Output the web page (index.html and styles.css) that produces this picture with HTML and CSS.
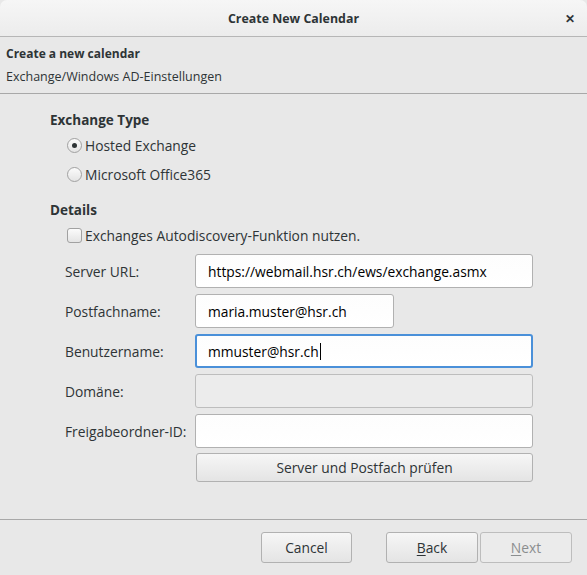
FILE: index.html
```html
<!DOCTYPE html>
<html>
<head>
<meta charset="utf-8">
<link rel="stylesheet" href="styles.css">
</head>
<body>
<div class="window">
  <div class="titlebar">
    <span class="title">Create New Calendar</span>
    <span class="close">✕</span>
  </div>
  <div class="header">
    <div class="header-title">Create a new calendar</div>
    <div class="header-sub">Exchange/Windows AD-Einstellungen</div>
  </div>
  <div class="content">
    <div class="section-title">Exchange Type</div>
    <label class="choice first"><span class="radio checked"></span>Hosted Exchange</label>
    <label class="choice second"><span class="radio"></span>Microsoft Office365</label>
    <div class="section-title details">Details</div>
    <label class="choice check-row"><span class="checkbox"></span>Exchanges Autodiscovery-Funktion nutzen.</label>
    <div class="form">
      <div class="label">Server URL:</div>
      <div class="entry">https://webmail.hsr.ch/ews/exchange.asmx</div>
      <div class="label">Postfachname:</div>
      <div class="entry short">maria.muster@hsr.ch</div>
      <div class="label">Benutzername:</div>
      <div class="entry focused">mmuster@hsr.ch<span class="caret"></span></div>
      <div class="label">Domäne:</div>
      <div class="entry disabled"></div>
      <div class="label">Freigabeordner-ID:</div>
      <div class="entry"></div>
      <div></div>
      <div class="button wide">Server und Postfach prüfen</div>
    </div>
  </div>
  <div class="footer">
    <div class="button cancel">Cancel</div>
    <div class="nav">
      <div class="button back"><u>B</u>ack</div>
      <div class="button next disabled-btn"><u>N</u>ext</div>
    </div>
  </div>
</div>
</body>
</html>
```
FILE: styles.css
```css
* { box-sizing: border-box; }
html, body { margin: 0; padding: 0; }
body {
  width: 587px;
  height: 575px;
  background: #e8e8e8;
  font-family: "Open Sans", "Noto Sans", sans-serif;
  font-size: 13.8px;
  color: #2e3436;
  overflow: hidden;
}
.window {
  height: 575px;
  display: flex;
  flex-direction: column;
  background: #e8e8e8;
}
.titlebar {
  height: 37px;
  flex: none;
  display: flex;
  align-items: center;
  justify-content: center;
  position: relative;
  background: linear-gradient(#f6f6f6, #ececec);
  border-bottom: 1px solid #b6b6b6;
  border-top-right-radius: 7px;
  border-top-left-radius: 7px;
}
.title {
  font-weight: bold;
  font-size: 12.4px;
  color: #2e3436;
}
.close {
  position: absolute;
  right: 12px;
  top: 10px;
  font-size: 12px;
  font-weight: bold;
  color: #2e3436;
}
.header {
  height: 57px;
  flex: none;
  padding: 7px 6px 0 6px;
  border-bottom: 1px solid #a8a8a8;
  background: #e8e8e8;
  font-size: 12.5px;
}
.header-title {
  font-weight: bold;
  font-size: 12px;
  line-height: 20px;
}
.header-sub {
  line-height: 20px;
  margin-top: 3px;
}
.content {
  flex: 1;
  padding: 16px 0 0 50px;
}
.section-title {
  font-weight: bold;
  line-height: 20px;
  height: 20px;
  font-size: 13.5px;
}
.details { margin-top: 14px; }
.choice {
  display: flex;
  align-items: center;
  height: 24px;
  padding-left: 17px;
}
.choice.first { margin-top: 3px; }
.choice.second { margin-top: 5px; }
.choice.check-row { margin-top: 3px; }
.radio {
  width: 15px;
  height: 15px;
  border-radius: 50%;
  border: 1px solid #a1a1a1;
  background: linear-gradient(#fbfbfb, #e4e4e4);
  margin-right: 3px;
  position: relative;
  flex: none;
}
.radio.checked::after {
  content: "";
  position: absolute;
  left: 4px;
  top: 4px;
  width: 5px;
  height: 5px;
  border-radius: 50%;
  background: #2e3436;
}
.checkbox {
  width: 15px;
  height: 15px;
  border-radius: 3px;
  border: 1px solid #a1a1a1;
  background: linear-gradient(#fbfbfb, #e4e4e4);
  margin-right: 3px;
  flex: none;
}
.form {
  margin-top: 7px;
  margin-left: 15px;
  width: 468px;
  display: grid;
  grid-template-columns: 130px 338px;
  row-gap: 6px;
}
.label {
  height: 34px;
  display: flex;
  align-items: center;
}
.entry {
  height: 34px;
  border: 1px solid #b1b1b1;
  border-radius: 3px;
  background: linear-gradient(#fdfdfd, #ffffff);
  display: flex;
  align-items: center;
  padding-left: 12px;
  color: #000;
}
.entry.short { width: 199px; }
.entry.focused {
  border: 2px solid #4a90d9;
  padding-left: 11px;
}
.entry.disabled {
  background: #ececec;
  border-color: #bdbdbd;
}
.caret {
  display: inline-block;
  width: 1px;
  height: 17px;
  background: #000;
  margin-left: 1px;
}
.button {
  height: 29px;
  border: 1px solid #b1b1b1;
  border-radius: 3px;
  background: linear-gradient(#f6f6f6, #e4e4e4);
  display: flex;
  align-items: center;
  justify-content: center;
  color: #2e3436;
}
.button.wide {
  width: 337px;
  margin-left: 1px;
  margin-top: -1px;
}
.button u { text-decoration: underline; text-underline-offset: 2px; }
.footer {
  height: 56px;
  flex: none;
  border-top: 1px solid #a8a8a8;
  display: flex;
  align-items: flex-start;
  padding: 12px 15px 0 261px;
}
.cancel { width: 92px; height: 31px; }
.nav {
  margin-left: 34px;
  display: flex;
  gap: 2px;
}
.back, .next { width: 92px; height: 31px; }
.disabled-btn {
  color: #8b8e8f;
  background: #ebebeb;
  border-color: #bdbdbd;
}
```
